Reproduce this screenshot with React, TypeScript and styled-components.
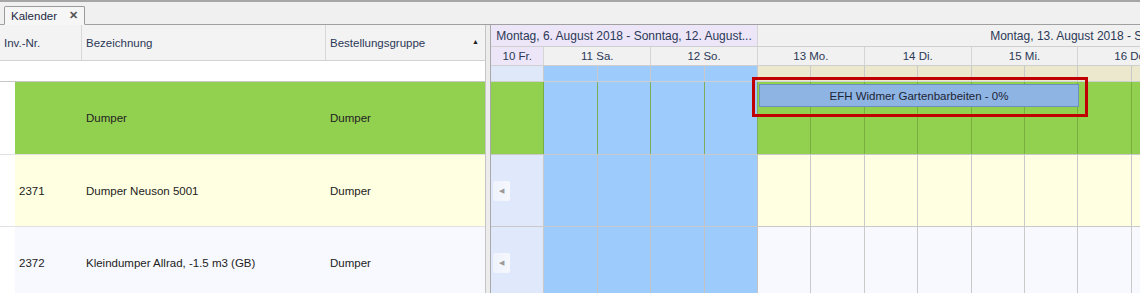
import React from "react";
import styled, { createGlobalStyle } from "styled-components";

const HALF = 53.4;

const Global = createGlobalStyle`
  html, body { margin: 0; padding: 0; background: #f0f0f0; }
  body { font-family: "Liberation Sans", Arial, sans-serif; font-size: 11.5px; }
`;

const Root = styled.div`
  width: 1140px;
  height: 293px;
  overflow: hidden;
  background: #f0f0f0;
  display: flex;
  flex-direction: column;
`;

const TabStrip = styled.div`
  height: 22px;
  border-top: 2px solid #a6a6a6;
  border-bottom: 1px solid #a0a0a0;
  background: #f0f0f0;
  display: flex;
  align-items: flex-end;
  padding-left: 4px;
  flex-shrink: 0;
`;

const Tab = styled.div`
  width: 81px;
  height: 19px;
  margin-bottom: -1px;
  border: 1px solid #9a9a9a;
  border-bottom: 1px solid #f6f6f6;
  border-radius: 2px 2px 0 0;
  background: #f6f6f6;
  display: flex;
  align-items: center;
  justify-content: space-between;
  padding: 0 6px 0 6px;
  box-sizing: border-box;
  color: #1e2a44;
  font-size: 11.5px;
`;

const CloseX = styled.span`
  font-size: 11px;
  font-weight: bold;
  color: #555;
  line-height: 1;
`;

const Body = styled.div`
  flex: 1;
  display: flex;
  min-height: 0;
`;

const GridPanel = styled.div`
  width: 485px;
  flex-shrink: 0;
  border-right: 1px solid #c4c4c4;
  display: flex;
  flex-direction: column;
  background: #ffffff;
`;

const GridHeader = styled.div`
  height: 35px;
  display: grid;
  grid-template-columns: 82px 244px 1fr;
  background: #f3f3f3;
  border-bottom: 1px solid #d2d2d2;
  flex-shrink: 0;
`;

const HeaderCell = styled.div<{ $last?: boolean }>`
  display: flex;
  align-items: center;
  justify-content: space-between;
  padding-left: 4px;
  padding-right: 6px;
  color: #2b3856;
  border-right: ${(p) => (p.$last ? "none" : "1px solid #d8d8d8")};
`;

const SortArrow = styled.span`
  font-size: 7px;
  color: #222;
  margin-top: -2px;
`;

const FilterRow = styled.div`
  height: 20px;
  background: #ffffff;
  border-bottom: 1px solid #c8c8c8;
  flex-shrink: 0;
`;

const GridRow = styled.div<{ $h: number }>`
  height: ${(p) => p.$h}px;
  flex-shrink: 0;
  display: grid;
  grid-template-columns: 15px 67px 244px 1fr;
  border-bottom: 1px solid #e2e2e2;
  box-sizing: border-box;
`;

const Indicator = styled.div`
  background: #ffffff;
`;

const DataCell = styled.div<{ $bg: string }>`
  background: ${(p) => p.$bg};
  display: flex;
  align-items: center;
  padding-left: 4px;
  color: #222;
`;

const Splitter = styled.div`
  width: 4px;
  flex-shrink: 0;
  background: #ececec;
  border-right: 1px solid #a9a9a9;
`;

const Scheduler = styled.div`
  flex: 1;
  overflow: hidden;
  position: relative;
  display: flex;
  flex-direction: column;
  background: #f8f9fe;
`;

const Track = styled.div<{ $h: number }>`
  display: flex;
  height: ${(p) => p.$h}px;
  flex-shrink: 0;
  box-sizing: border-box;
  border-bottom: 1px solid #cfcfcf;
`;

const WeekCell = styled.div<{ $w: number; $lav?: boolean }>`
  width: ${(p) => p.$w}px;
  flex-shrink: 0;
  box-sizing: border-box;
  background: ${(p) => (p.$lav ? "#ede6f8" : "#f1f1f1")};
  border-right: 1px solid #d6d6d6;
  display: flex;
  align-items: center;
  justify-content: center;
  color: #2b3856;
  font-size: 12px;
  white-space: nowrap;
  overflow: hidden;
  padding: 0 2px;
`;

const DayCell = styled.div<{ $w: number; $lav?: boolean }>`
  width: ${(p) => p.$w}px;
  flex-shrink: 0;
  box-sizing: border-box;
  background: ${(p) => (p.$lav ? "#ede6f8" : "#f1f1f1")};
  border-right: 1px solid #d6d6d6;
  display: flex;
  align-items: center;
  justify-content: center;
  color: #2b3856;
  white-space: nowrap;
`;

type Kind = "fri" | "weekend" | "work";

const slotBg: Record<Kind, string> = {
  fri: "#dfe8f9",
  weekend: "#9ccbfc",
  work: "#ebe8cd",
};

const SlotCell = styled.div<{ $kind: Kind }>`
  width: ${HALF}px;
  flex-shrink: 0;
  box-sizing: border-box;
  background: ${(p) => slotBg[p.$kind]};
  border-right: 1px solid #c9c9c9;
`;

const ResRow = styled.div<{ $h: number }>`
  display: flex;
  height: ${(p) => p.$h}px;
  flex-shrink: 0;
  box-sizing: border-box;
  border-bottom: 1px solid #c9c9c9;
`;

const ResCell = styled.div<{ $bg: string; $line: string }>`
  width: ${HALF}px;
  flex-shrink: 0;
  box-sizing: border-box;
  background: ${(p) => p.$bg};
  border-right: 1px solid ${(p) => p.$line};
  display: flex;
  align-items: center;
`;

const MoreButton = styled.div`
  width: 17px;
  height: 20px;
  margin-left: 2px;
  border-radius: 2px;
  background: linear-gradient(90deg, #eef2fb, #f6f8fd);
  display: flex;
  align-items: center;
  justify-content: center;
  color: #9a9a9a;
  font-size: 7px;
`;

const EventBar = styled.div`
  position: absolute;
  left: 268px;
  top: 59px;
  width: 320px;
  height: 23px;
  box-sizing: border-box;
  background: #8db4e3;
  border: 1px solid #6c8fbd;
  display: flex;
  align-items: center;
  justify-content: center;
  color: #1d2433;
`;

const Highlight = styled.div`
  position: absolute;
  left: 261px;
  top: 52px;
  width: 336px;
  height: 40px;
  box-sizing: border-box;
  border: 3px solid #c00000;
  pointer-events: none;
`;

const kinds: Kind[] = [
  "fri",
  "weekend",
  "weekend",
  "weekend",
  "weekend",
  "work",
  "work",
  "work",
  "work",
  "work",
  "work",
  "work",
  "work",
  "work",
];

const rows = [
  { inv: "", name: "Dumper", group: "Dumper", bg: "#92d050", h: 73, variant: "green" },
  { inv: "2371", name: "Dumper Neuson 5001", group: "Dumper", bg: "#ffffe1", h: 72, variant: "yellow" },
  { inv: "2372", name: "Kleindumper Allrad, -1.5 m3 (GB)", group: "Dumper", bg: "#f8f9fe", h: 72, variant: "white" },
];

const days = ["13 Mo.", "14 Di.", "15 Mi.", "16 Do."];

function resCellStyle(variant: string, k: Kind): { bg: string; line: string } {
  if (k === "weekend") {
    return { bg: "#9ccbfc", line: variant === "green" ? "#7fae5a" : "#c2c2c2" };
  }
  if (variant === "green") return { bg: "#92d050", line: "#7aae3e" };
  if (k === "fri") return { bg: "#e0e8fb", line: "#c9c9c9" };
  if (variant === "yellow") return { bg: "#ffffe1", line: "#cacaca" };
  return { bg: "#f8f9fe", line: "#cacaca" };
}

export default function App() {
  return (
    <Root>
      <Global />
      <TabStrip>
        <Tab>
          <span>Kalender</span>
          <CloseX>✕</CloseX>
        </Tab>
      </TabStrip>
      <Body>
        <GridPanel>
          <GridHeader>
            <HeaderCell>Inv.-Nr.</HeaderCell>
            <HeaderCell>Bezeichnung</HeaderCell>
            <HeaderCell $last>
              <span>Bestellungsgruppe</span>
              <SortArrow>▲</SortArrow>
            </HeaderCell>
          </GridHeader>
          <FilterRow />
          {rows.map((r, i) => (
            <GridRow key={i} $h={r.h}>
              <Indicator />
              <DataCell $bg={r.bg}>{r.inv}</DataCell>
              <DataCell $bg={r.bg}>{r.name}</DataCell>
              <DataCell $bg={r.bg}>{r.group}</DataCell>
            </GridRow>
          ))}
        </GridPanel>
        <Splitter />
        <Scheduler>
          <Track $h={22}>
            <WeekCell $w={HALF * 5} $lav>
              Montag, 6. August 2018 - Sonntag, 12. August...
            </WeekCell>
            <WeekCell $w={HALF * 14}>
              Montag, 13. August 2018 - Sonntag, 19. August 2018
            </WeekCell>
          </Track>
          <Track $h={19}>
            <DayCell $w={HALF} $lav>
              10 Fr.
            </DayCell>
            <DayCell $w={HALF * 2}>11 Sa.</DayCell>
            <DayCell $w={HALF * 2}>12 So.</DayCell>
            {days.map((d) => (
              <DayCell key={d} $w={HALF * 2}>
                {d}
              </DayCell>
            ))}
          </Track>
          <Track $h={16}>
            {kinds.map((k, i) => (
              <SlotCell key={i} $kind={k} />
            ))}
          </Track>
          {rows.map((r, ri) => (
            <ResRow key={ri} $h={r.h}>
              {kinds.map((k, i) => {
                const s = resCellStyle(r.variant, k);
                return (
                  <ResCell key={i} $bg={s.bg} $line={s.line}>
                    {k === "fri" && r.variant !== "green" ? <MoreButton>◀</MoreButton> : null}
                  </ResCell>
                );
              })}
            </ResRow>
          ))}
          <EventBar>EFH Widmer Gartenbarbeiten - 0%</EventBar>
          <Highlight />
        </Scheduler>
      </Body>
    </Root>
  );
}
